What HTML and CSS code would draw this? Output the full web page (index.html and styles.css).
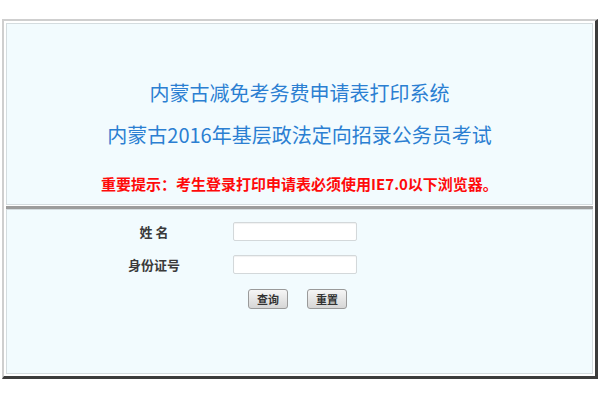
FILE: index.html
```html
<!DOCTYPE html>
<html lang="zh-CN">
<head>
<meta charset="utf-8">
<title>内蒙古减免考务费申请表打印系统</title>
<link rel="stylesheet" href="styles.css">
</head>
<body>
<div class="frame">
  <div class="panel top">
    <div class="title t1">内蒙古减免考务费申请表打印系统</div>
    <div class="title t2">内蒙古2016年基层政法定向招录公务员考试</div>
    <div class="notice">重要提示：考生登录打印申请表必须使用IE7.0以下浏览器。</div>
  </div>
  <div class="sep"></div>
  <div class="panel bottom">
    <form class="form">
      <label class="label" for="xm">姓 名</label>
      <input class="field" id="xm" type="text">
      <label class="label" for="sfz">身份证号</label>
      <input class="field" id="sfz" type="text">
      <div class="buttons">
        <button type="button" class="btn">查询</button>
        <button type="reset" class="btn">重置</button>
      </div>
    </form>
  </div>
</div>
</body>
</html>
```

FILE: styles.css
```css
html, body {
  margin: 0;
  padding: 0;
  background: #ffffff;
  font-family: "Noto Sans CJK SC", "Noto Sans", sans-serif;
}

.frame {
  box-sizing: border-box;
  margin: 19px 2px 0 2px;
  width: 596px;
  height: 360px;
  border-top: 2px solid #cfcfcf;
  border-left: 2px solid #cfcfcf;
  border-right: 3px solid #3c3c3c;
  border-bottom: 3px solid #3c3c3c;
  padding: 2px;
  background: #ffffff;
  display: flex;
  flex-direction: column;
}

.panel {
  background: #f2fbfe;
  border: 1px solid #d4dcdf;
  box-sizing: border-box;
}

.top {
  height: 182px;
  padding-top: 48px;
  display: flex;
  flex-direction: column;
  align-items: center;
}

.title {
  color: #2b7fd2;
  font-size: 20px;
  line-height: 42px;
  white-space: nowrap;
}

.notice {
  margin-top: 14px;
  color: #ff0a0a;
  font-size: 15px;
  font-weight: bold;
  line-height: 28px;
  white-space: nowrap;
}

.sep {
  height: 3px;
  background: #9c9c9c;
  margin-top: 1px;
  flex: none;
}

.bottom {
  flex: 1;
  padding: 12px 0 0 82px;
}

.form {
  display: grid;
  grid-template-columns: 130px 124px;
  column-gap: 14px;
  row-gap: 14px;
  align-items: center;
  margin: 0;
}

.label {
  text-align: center;
  font-size: 13px;
  font-weight: bold;
  color: #3a3a3a;
  line-height: 19px;
}

.field {
  box-sizing: border-box;
  width: 124px;
  height: 19px;
  margin: 0;
  padding: 0 3px;
  border: 1px solid #d3d8da;
  border-radius: 2px;
  background: #ffffff;
  box-shadow: inset 0 1px 1px rgba(0, 0, 0, 0.06);
}

.buttons {
  grid-column: 2;
  display: flex;
  gap: 19px;
  padding-left: 15px;
  margin-top: 1px;
}

.btn {
  box-sizing: border-box;
  width: 40px;
  height: 20px;
  margin: 0;
  padding: 0;
  border: 1px solid #9a9a9a;
  border-radius: 3px;
  background: linear-gradient(#f6f6f6, #d6d6d6);
  font-family: "Noto Sans CJK SC", sans-serif;
  font-size: 11px;
  font-weight: bold;
  color: #333333;
  line-height: 18px;
}
```
